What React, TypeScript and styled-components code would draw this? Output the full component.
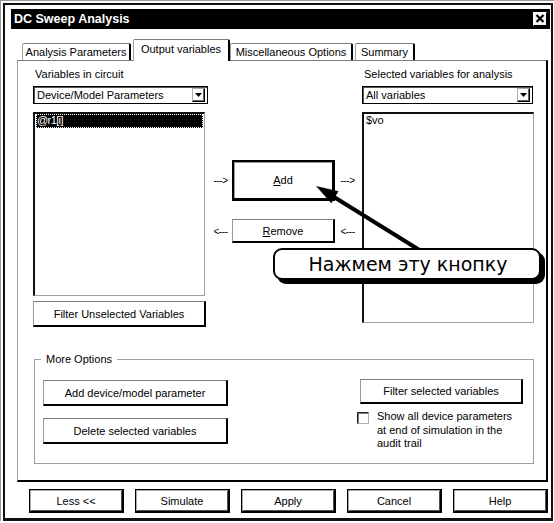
import React from 'react';
import styled, { createGlobalStyle } from 'styled-components';

const GlobalStyle = createGlobalStyle`
  html, body { margin: 0; padding: 0; background: #fff; }
  body {
    font-family: "Liberation Sans", Arial, sans-serif;
    font-size: 11px;
    color: #000;
  }
  #root { width: 554px; height: 523px; }
`;

const Window = styled.div`
  position: relative;
  box-sizing: border-box;
  width: 554px;
  height: 521px;
  border-top: 1px solid #9a9a9a;
  border-left: 1px solid #9a9a9a;
  padding: 2px 1px 0 2px;
  background: #fff;
`;

const Frame = styled.div`
  box-sizing: border-box;
  height: 100%;
  border: 2px solid #111;
  border-bottom-width: 3px;
  padding: 4px 1px 0 6px;
  display: flex;
  flex-direction: column;
`;

const TitleBar = styled.div`
  height: 20px;
  flex: none;
  background: #000;
  color: #fff;
  display: flex;
  align-items: center;
  justify-content: space-between;
  padding: 0 3px 0 3px;
`;

const TitleText = styled.span`
  font-weight: bold;
  font-size: 12.5px;
  line-height: 20px;
`;

const CloseBox = styled.div`
  box-sizing: border-box;
  width: 14px;
  height: 14px;
  background: #f4f4f4;
  border: 1px solid;
  border-color: #fff #000 #000 #fff;
  display: flex;
  align-items: center;
  justify-content: center;
  margin-top: -1px;
`;

const Body = styled.div`
  flex: 1;
  display: flex;
  flex-direction: column;
  padding: 10px 2px 0 6px;
`;

const TabStrip = styled.div`
  height: 21px;
  display: flex;
  align-items: flex-end;
  padding-left: 5px;
  position: relative;
  z-index: 1;
`;

const Tab = styled.div<{ $active?: boolean; $w: number; $ml?: number }>`
  box-sizing: border-box;
  width: ${(p) => p.$w}px;
  height: ${(p) => (p.$active ? 22 : 17)}px;
  margin-left: ${(p) => p.$ml ?? 0}px;
  margin-bottom: ${(p) => (p.$active ? -1 : 0)}px;
  border-top: 1px solid #7a7a7a;
  border-left: 1px solid #a0a0a0;
  border-right: 2px solid #000;
  border-radius: 2px 2px 0 0;
  background: #fff;
  text-align: center;
  line-height: 13px;
  padding-top: ${(p) => (p.$active ? 3 : 2)}px;
  white-space: nowrap;
`;

const Panel = styled.div`
  box-sizing: border-box;
  height: 422px;
  border-top: 1px solid #7a7a7a;
  border-left: 1px solid #a0a0a0;
  border-right: 2px solid #000;
  border-bottom: 2px solid #000;
  padding: 7px 12px 0 15px;
  display: flex;
  flex-direction: column;
`;

const TopGrid = styled.div`
  display: grid;
  grid-template-columns: 175px 154px 172px;
  align-items: start;
`;

const Column = styled.div`
  display: flex;
  flex-direction: column;
`;

const Label = styled.div`
  line-height: 13px;
  height: 13px;
  padding-left: 2px;
  white-space: nowrap;
`;

const Select = styled.div<{ $w: number }>`
  box-sizing: border-box;
  width: ${(p) => p.$w}px;
  height: 18px;
  margin-top: 5px;
  border: 1px solid #000;
  box-shadow: inset 1px 1px 0 #555;
  display: flex;
  align-items: center;
  justify-content: space-between;
  padding: 0 2px 0 3px;
  white-space: nowrap;
`;

const DropButton = styled.div`
  box-sizing: border-box;
  width: 13px;
  height: 14px;
  border: 1px solid;
  border-color: #b0b0b0 #000 #000 #b0b0b0;
  box-shadow: inset -1px -1px 0 #666;
  display: flex;
  align-items: center;
  justify-content: center;
`;

const List = styled.div<{ $w: number; $h: number }>`
  box-sizing: border-box;
  width: ${(p) => p.$w}px;
  height: ${(p) => p.$h}px;
  margin-top: 8px;
  border-style: solid;
  border-width: 2px 1px 1px 2px;
  border-color: #111 #a0a0a0 #a0a0a0 #111;
  padding: 0 1px;
`;

const ListItem = styled.div<{ $selected?: boolean }>`
  box-sizing: border-box;
  height: 14px;
  line-height: 12px;
  padding: 0 1px;
  background: ${(p) => (p.$selected ? '#000' : 'transparent')};
  color: ${(p) => (p.$selected ? '#fff' : '#000')};
  outline: ${(p) => (p.$selected ? '1px dotted #fff' : 'none')};
  outline-offset: -1px;
  letter-spacing: ${(p) => (p.$selected ? '-0.6px' : '0')};
`;

const Button = styled.div<{ $variant?: 'plain' | 'default' | 'footer'; $w?: number; $h: number }>`
  box-sizing: border-box;
  width: ${(p) => (p.$w ? `${p.$w}px` : 'auto')};
  height: ${(p) => p.$h}px;
  background: #fff;
  display: flex;
  align-items: center;
  justify-content: center;
  white-space: nowrap;
  flex: none;
  ${(p) =>
    p.$variant === 'default'
      ? `
    border-style: solid;
    border-color: #000;
    border-width: 2px 3px 3px 2px;
    box-shadow: inset 1px 1px 0 #9a9a9a;
  `
      : p.$variant === 'footer'
      ? `
    border-style: solid;
    border-color: #000;
    border-width: 1px 2px 2px 1px;
    box-shadow: inset 1px 1px 0 #a8a8a8, inset -1px -1px 0 #505050;
  `
      : `
    border-style: solid;
    border-width: 1px 2px 2px 1px;
    border-color: #7a7a7a #000 #000 #9a9a9a;
  `}
`;

const MoveRow = styled.div<{ $mt: number }>`
  display: flex;
  align-items: center;
  padding-left: 5px;
  margin-top: ${(p) => p.$mt}px;
`;

const Dashes = styled.span`
  width: 15px;
  font-size: 10px;
  letter-spacing: -0.4px;
  white-space: nowrap;
  text-align: center;
  margin: 0 4px 0 0;
`;

const DashesRight = styled(Dashes)`
  margin: 0 0 0 5px;
`;

const GroupBox = styled.div`
  margin-top: 32px;
  margin-left: 1px;
  border: 1px solid #a0a0a0;
  padding: 0 10px 12px 8px;
  display: flex;
  flex-direction: column;
`;

const GroupTitle = styled.div`
  align-self: flex-start;
  margin: -7px 0 0 -2px;
  padding: 0 5px;
  background: #fff;
  line-height: 13px;
  height: 13px;
`;

const GroupBody = styled.div`
  margin-top: 13px;
  display: flex;
  justify-content: space-between;
  align-items: flex-start;
`;

const GroupLeft = styled.div`
  display: flex;
  flex-direction: column;
  gap: 12px;
  padding-top: 1px;
`;

const GroupRight = styled.div`
  width: 166px;
  display: flex;
  flex-direction: column;
  align-items: flex-end;
`;

const CheckRow = styled.div`
  width: 166px;
  display: flex;
  align-items: flex-start;
  margin-top: 6px;
`;

const CheckBox = styled.div`
  box-sizing: border-box;
  width: 12px;
  height: 12px;
  flex: none;
  margin-top: 2px;
  border: 1px solid;
  border-color: #222 #b0b0b0 #b0b0b0 #222;
  box-shadow: inset 1px 1px 0 #777;
  background: #fff;
`;

const CheckLabel = styled.div`
  margin-left: 8px;
  line-height: 13.5px;
`;

const FooterRow = styled.div`
  margin-top: 7px;
  padding-left: 12px;
  display: flex;
  justify-content: space-between;
`;

const Callout = styled.div`
  position: absolute;
  left: 272px;
  top: 247px;
  box-sizing: border-box;
  width: 268px;
  height: 32px;
  border: 2px solid #000;
  border-radius: 9px;
  background: #fff;
  box-shadow: 4px 4px 0 #000;
  display: flex;
  align-items: center;
  justify-content: center;
  font-family: "DejaVu Sans", "Liberation Sans", sans-serif;
  font-size: 19px;
  line-height: 28px;
  padding-left: 2px;
  z-index: 3;
`;

const ArrowSvg = styled.svg`
  position: absolute;
  left: 299px;
  top: 174px;
  z-index: 2;
  overflow: visible;
`;

export default function App() {
  return (
    <>
      <GlobalStyle />
      <Window>
        <Frame>
          <TitleBar>
            <TitleText>DC Sweep Analysis</TitleText>
            <CloseBox>
              <svg width="10" height="9" viewBox="0 0 10 9">
                <path d="M1.5 1 L8.5 8 M8.5 1 L1.5 8" stroke="#000" strokeWidth="2.2" />
              </svg>
            </CloseBox>
          </TitleBar>
          <Body>
            <TabStrip>
              <Tab $w={109}>Analysis Parameters</Tab>
              <Tab $w={97} $ml={2} $active>
                Output variables
              </Tab>
              <Tab $w={123}>Miscellaneous Options</Tab>
              <Tab $w={60} $ml={2}>
                Summary
              </Tab>
            </TabStrip>
            <Panel>
              <TopGrid>
                <Column>
                  <Label>Variables in circuit</Label>
                  <Select $w={175}>
                    <span>Device/Model Parameters</span>
                    <DropButton>
                      <svg width="7" height="4" viewBox="0 0 7 4">
                        <path d="M0 0 H7 L3.5 4 Z" fill="#000" />
                      </svg>
                    </DropButton>
                  </Select>
                  <List $w={172} $h={184}>
                    <ListItem $selected>@r1[i]</ListItem>
                  </List>
                  <Button $w={173} $h={26} style={{ marginTop: 5 }}>
                    Filter Unselected Variables
                  </Button>
                </Column>
                <Column>
                  <MoveRow $mt={92}>
                    <Dashes>---&gt;</Dashes>
                    <Button $variant="default" $w={103} $h={41}>
                      <span>
                        <u>A</u>dd
                      </span>
                    </Button>
                    <DashesRight>---&gt;</DashesRight>
                  </MoveRow>
                  <MoveRow $mt={18}>
                    <Dashes>&lt;---</Dashes>
                    <Button $w={103} $h={24}>
                      <span>
                        <u>R</u>emove
                      </span>
                    </Button>
                    <DashesRight>&lt;---</DashesRight>
                  </MoveRow>
                </Column>
                <Column>
                  <Label>Selected variables for analysis</Label>
                  <Select $w={171}>
                    <span>All variables</span>
                    <DropButton>
                      <svg width="7" height="4" viewBox="0 0 7 4">
                        <path d="M0 0 H7 L3.5 4 Z" fill="#000" />
                      </svg>
                    </DropButton>
                  </Select>
                  <List $w={172} $h={211}>
                    <ListItem>$vo</ListItem>
                  </List>
                </Column>
              </TopGrid>
              <GroupBox>
                <GroupTitle>More Options</GroupTitle>
                <GroupBody>
                  <GroupLeft>
                    <Button $w={185} $h={26}>
                      Add device/model parameter
                    </Button>
                    <Button $w={185} $h={26}>
                      Delete selected variables
                    </Button>
                  </GroupLeft>
                  <GroupRight>
                    <Button $w={163} $h={25}>
                      Filter selected variables
                    </Button>
                    <CheckRow>
                      <CheckBox />
                      <CheckLabel>
                        Show all device parameters
                        <br />
                        at end of simulation in the
                        <br />
                        audit trail
                      </CheckLabel>
                    </CheckRow>
                  </GroupRight>
                </GroupBody>
              </GroupBox>
            </Panel>
            <FooterRow>
              <Button $variant="footer" $w={95} $h={24}>Less &lt;&lt;</Button>
              <Button $variant="footer" $w={95} $h={24}>Simulate</Button>
              <Button $variant="footer" $w={95} $h={24}>Apply</Button>
              <Button $variant="footer" $w={95} $h={24}>Cancel</Button>
              <Button $variant="footer" $w={95} $h={24}>Help</Button>
            </FooterRow>
          </Body>
        </Frame>
        <ArrowSvg width="130" height="80" viewBox="0 0 130 80">
          <path d="M121 76 L34 22" stroke="#000" strokeWidth="4" strokeLinecap="butt" />
          <polygon points="16,11 31.3,28.3 38.5,16.3" fill="#000" />
        </ArrowSvg>
        <Callout>Нажмем эту кнопку</Callout>
      </Window>
    </>
  );
}
